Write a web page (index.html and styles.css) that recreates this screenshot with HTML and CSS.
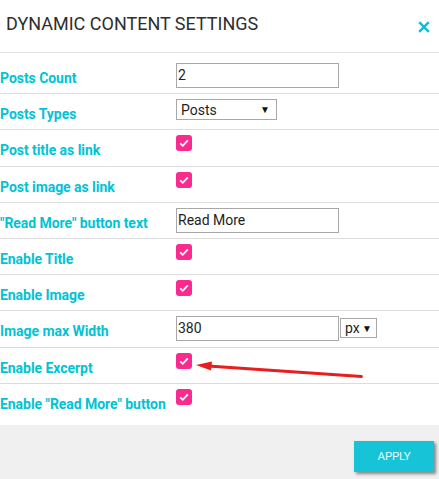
FILE: index.html
```html
<!DOCTYPE html>
<html>
<head>
<meta charset="utf-8">
<link rel="stylesheet" href="styles.css">
</head>
<body>
<div class="dialog">
  <div class="header">
    <div class="title">DYNAMIC CONTENT SETTINGS</div>
    <svg class="close" width="12" height="12" viewBox="0 0 12 12"><path d="M1.2 1.2 L10.8 10.8 M10.8 1.2 L1.2 10.8" stroke="#12bfd2" stroke-width="2.6" stroke-linecap="butt"/></svg>
  </div>
  <div class="content">
    <div class="row"><div class="label">Posts Count</div><div class="ctrl"><div class="input">2</div></div></div>
    <div class="row"><div class="label">Posts Types</div><div class="ctrl"><div class="select sel-types"><span>Posts</span><span class="caret">▼</span></div></div></div>
    <div class="row"><div class="label">Post title as link</div><div class="ctrl"><span class="check"><svg width="16" height="16" viewBox="0 0 16 16"><path d="M4.2 8.3 L6.8 10.8 L11.8 5.4" fill="none" stroke="#fff" stroke-width="1.8"/></svg></span></div></div>
    <div class="row"><div class="label">Post image as link</div><div class="ctrl"><span class="check"><svg width="16" height="16" viewBox="0 0 16 16"><path d="M4.2 8.3 L6.8 10.8 L11.8 5.4" fill="none" stroke="#fff" stroke-width="1.8"/></svg></span></div></div>
    <div class="row"><div class="label">"Read More" button text</div><div class="ctrl"><div class="input">Read More</div></div></div>
    <div class="row"><div class="label">Enable Title</div><div class="ctrl"><span class="check"><svg width="16" height="16" viewBox="0 0 16 16"><path d="M4.2 8.3 L6.8 10.8 L11.8 5.4" fill="none" stroke="#fff" stroke-width="1.8"/></svg></span></div></div>
    <div class="row"><div class="label">Enable Image</div><div class="ctrl"><span class="check"><svg width="16" height="16" viewBox="0 0 16 16"><path d="M4.2 8.3 L6.8 10.8 L11.8 5.4" fill="none" stroke="#fff" stroke-width="1.8"/></svg></span></div></div>
    <div class="row"><div class="label">Image max Width</div><div class="ctrl"><div class="input">380</div><div class="select sel-unit"><span>px</span><span class="caret">▼</span></div></div></div>
    <div class="row"><div class="label">Enable Excerpt</div><div class="ctrl"><span class="check"><svg width="16" height="16" viewBox="0 0 16 16"><path d="M4.2 8.3 L6.8 10.8 L11.8 5.4" fill="none" stroke="#fff" stroke-width="1.8"/></svg></span></div></div>
    <div class="row last"><div class="label">Enable "Read More" button</div><div class="ctrl"><span class="check"><svg width="16" height="16" viewBox="0 0 16 16"><path d="M4.2 8.3 L6.8 10.8 L11.8 5.4" fill="none" stroke="#fff" stroke-width="1.8"/></svg></span></div></div>
  </div>
  <div class="footer">
    <button class="apply">APPLY</button>
  </div>
</div>
<svg class="annot" width="439" height="479" viewBox="0 0 439 479">
  <path d="M361.5 376.5 L208 366" stroke="#e81d1d" stroke-width="2.8" stroke-linecap="round"/>
  <polygon points="196,365 212,361.5 211,370.5" fill="#e81d1d"/>
</svg>
</body>
</html>
```
FILE: styles.css
```css
* { box-sizing: border-box; }
html, body { margin: 0; padding: 0; background: #fff; }
body { font-family: Roboto, "Liberation Sans", Arial, sans-serif; position: relative; width: 439px; height: 479px; overflow: hidden; }

.dialog { width: 439px; display: flex; flex-direction: column; }

.header {
  height: 53px;
  border-bottom: 1px solid #e3e3e3;
  display: flex;
  justify-content: space-between;
  align-items: flex-start;
}
.title {
  padding: 13px 0 0 6px;
  font-size: 18px;
  line-height: 21px;
  color: #2e2e2e;
}
.close { margin: 21px 9px 0 0; }

.content { padding: 5px 0 5px 0; }

.row {
  height: 36.2px;
  border-bottom: 1px solid #dcdcdc;
  display: flex;
  align-items: flex-start;
  padding-top: 5px;
}
.row.last { border-bottom: none; }

.label {
  width: 176px;
  flex: none;
  margin-top: 7px;
  font-size: 14px;
  line-height: 16px;
  font-weight: bold;
  color: #00c3d4;
  white-space: nowrap;
  letter-spacing: -0.05px;
}

.ctrl { display: flex; align-items: flex-start; }

.input {
  width: 163px;
  height: 25px;
  border: 1px solid #a8a8a8;
  font-size: 14px;
  line-height: 23px;
  padding-left: 1px;
  color: #1e1e1e;
}

.select {
  height: 21px;
  border: 1px solid #a8a8a8;
  display: flex;
  align-items: center;
  justify-content: space-between;
  font-size: 14px;
  color: #1e1e1e;
  background: #fff;
}
.sel-types { width: 101px; padding: 0 6px 0 4px; }
.sel-unit { width: 37px; height: 20px; margin: 2px 0 0 1px; padding: 0 4px 0 4px; }
.caret { font-size: 10px; color: #111; }

.check {
  width: 16px;
  height: 16px;
  border-radius: 3px;
  background: #fb2a8e;
  display: block;
}
.check svg { display: block; }

.footer {
  height: 54px;
  background: #f0f0f0;
  display: flex;
  justify-content: flex-end;
  align-items: flex-start;
  padding: 16px 5px 0 0;
}
.apply {
  width: 80px;
  height: 31px;
  border: none;
  background: #17c3d6;
  color: #e3fbfd;
  font-family: Roboto, "Liberation Sans", Arial, sans-serif;
  font-size: 11.5px;
  letter-spacing: -0.2px;
  box-shadow: 2px 2px 3px rgba(0,0,0,0.45);
  padding: 0;
}

.annot { position: absolute; left: 0; top: 0; pointer-events: none; }
```
